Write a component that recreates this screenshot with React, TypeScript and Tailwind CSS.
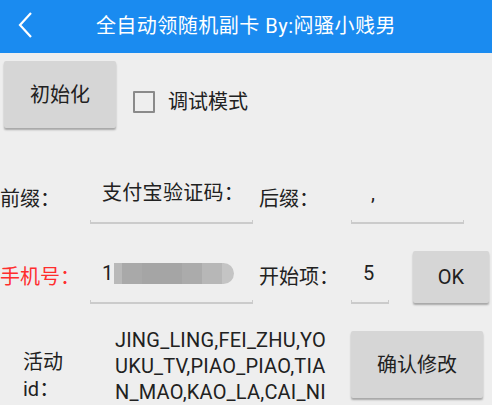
const cjk = "font-['Roboto','Noto_Sans_CJK_SC',sans-serif]"

function Underline({ className = "" }: { className?: string }) {
  return <div className={`h-[4px] border-x border-b-2 border-[#cbcbcb] ${className}`} />
}

function Field({ width, children }: { width: string; children?: React.ReactNode }) {
  return (
    <div className={`${width} h-[54px] flex flex-col`}>
      <div className="flex-1 flex items-center pl-[12px] pb-[4px]">{children}</div>
      <Underline />
    </div>
  )
}

export default function App() {
  const ids = ["JING_LING,FEI_ZHU,YO", "UKU_TV,PIAO_PIAO,TIA", "N_MAO,KAO_LA,CAI_NI"]

  return (
    <div className={`w-[492px] h-[405px] overflow-hidden bg-[#eeeeee] text-[#212121] ${cjk}`}>
      {/* title bar */}
      <div className="relative h-[53px] bg-[#1a8bf0] flex items-center justify-center">
        <svg className="absolute left-[16px] top-[10px]" width="20" height="30" viewBox="0 0 20 30">
          <path d="M15 3 L4 15 L15 27" fill="none" stroke="white" strokeWidth="2.2" />
        </svg>
        <span className="text-white text-[20px] tracking-[0.5px] pb-[2px]">全自动领随机副卡 By:闷骚小贱男</span>
      </div>

      {/* init + debug */}
      <div className="flex items-center mt-[8px] pl-[4px]">
        <button className="w-[112px] h-[67px] bg-[#d6d6d6] rounded-[2px] shadow-[0_2px_2px_rgba(0,0,0,0.3)] text-[20px]">
          初始化
        </button>
        <div className="ml-[17px] mt-[15px] w-[22px] h-[22px] border-2 border-[#8a8a8a] rounded-[1px]" />
        <span className="ml-[13px] mt-[15px] text-[20px]">调试模式</span>
      </div>

      {/* prefix / suffix */}
      <div className="flex items-center mt-[42px]">
        <span className="w-[90px] text-[20px] mt-[3px]">前缀：</span>
        <Field width="w-[163px]">
          <span className="text-[20px] tracking-[0.3px]">支付宝验证码：</span>
        </Field>
        <span className="w-[98px] pl-[6px] text-[20px] mt-[3px]">后缀：</span>
        <Field width="w-[113px]">
          <span className="text-[20px] pl-[8px]">,</span>
        </Field>
      </div>

      {/* phone / start */}
      <div className="flex items-center mt-[26px]">
        <span className="w-[90px] text-[20px] text-[#ff2d2d]">手机号：</span>
        <Field width="w-[163px]">
          <span className="text-[20px]">1</span>
          <div className="flex h-[21px] ml-[1px] rounded-r-full overflow-hidden rounded-l-[8px]">
            <div className="w-[8px] bg-[#b9b9b9]" />
            <div className="w-[20px] bg-[#a9a9a9]" />
            <div className="w-[40px] bg-[#a5a5a5]" />
            <div className="w-[20px] bg-[#ababab]" />
            <div className="w-[20px] bg-[#b7b7b7]" />
            <div className="w-[12px] bg-[#c4c4c4]" />
          </div>
        </Field>
        <span className="w-[98px] pl-[6px] text-[20px]">开始项：</span>
        <Field width="w-[38px]">
          <span className="text-[20px]">5</span>
        </Field>
        <button className="ml-[24px] w-[76px] h-[52px] bg-[#d6d6d6] rounded-[2px] shadow-[0_2px_2px_rgba(0,0,0,0.3)] text-[20px]">
          OK
        </button>
      </div>

      {/* activity ids */}
      <div className="flex items-start mt-[23px]">
        <div className="w-[115px] pl-[23px] mt-[22px] text-[20px] leading-[27px]">
          <div>活动</div>
          <div>id：</div>
        </div>
        <div className="w-[236px] text-[20px] tracking-[0.2px] leading-[26px]">
          {ids.map((l) => (
            <div key={l}>{l}</div>
          ))}
        </div>
        <button className="mt-[4px] w-[132px] h-[67px] bg-[#d6d6d6] rounded-[2px] shadow-[0_2px_2px_rgba(0,0,0,0.3)] text-[20px]">
          确认修改
        </button>
      </div>
    </div>
  )
}
